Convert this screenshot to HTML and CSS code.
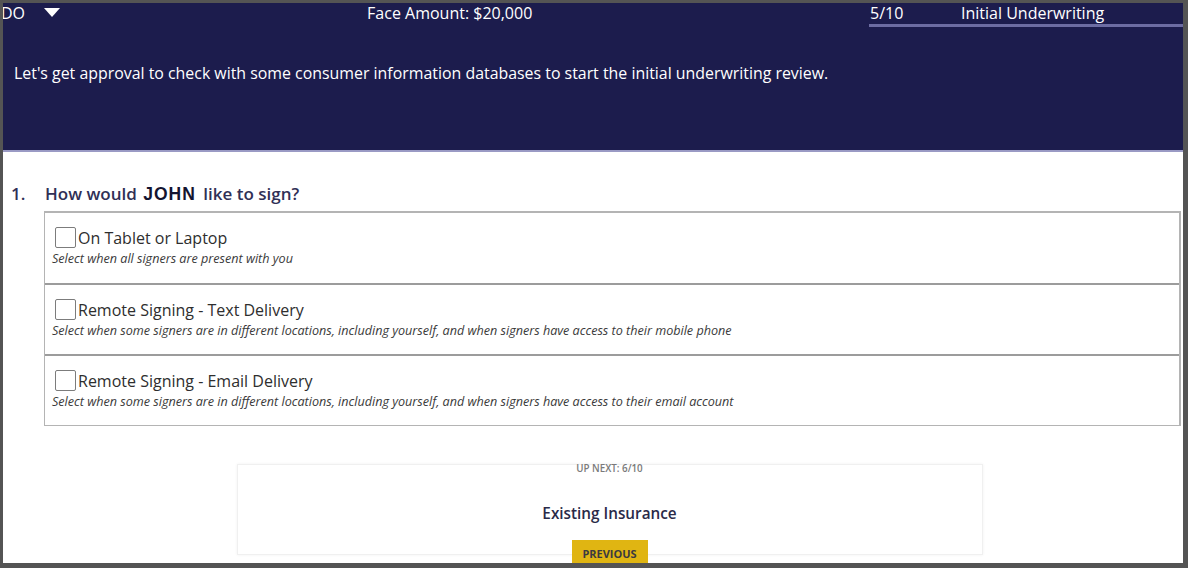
FILE: index.html
```html
<!DOCTYPE html>
<html>
<head>
<meta charset="utf-8">
<link rel="stylesheet" href="styles.css">
</head>
<body>
<div class="frame">
  <header class="hero">
    <div class="topbar">
      <div class="who">
        <span class="name">DO</span>
        <svg class="caret" width="16" height="10" viewBox="0 0 16 10"><polygon points="0,0 16,0 8,9" fill="#fff"/></svg>
      </div>
      <div class="face">Face Amount: $20,000</div>
      <div class="progress">
        <span class="step">5/10</span>
        <span class="stage">Initial Underwriting</span>
      </div>
    </div>
    <p class="intro">Let's get approval to check with some consumer information databases to start the initial underwriting review.</p>
  </header>

  <main class="content">
    <h2 class="question"><span class="num">1.</span><span class="qtext">How would <b class="who-name">JOHN</b> like to sign?</span></h2>
    <div class="options">
      <label class="option">
        <span class="opt-head"><span class="box"></span><span class="opt-label">On Tablet or Laptop</span></span>
        <span class="opt-desc">Select when all signers are present with you</span>
      </label>
      <label class="option">
        <span class="opt-head"><span class="box"></span><span class="opt-label">Remote Signing - Text Delivery</span></span>
        <span class="opt-desc">Select when some signers are in different locations, including yourself, and when signers have access to their mobile phone</span>
      </label>
      <label class="option">
        <span class="opt-head"><span class="box"></span><span class="opt-label">Remote Signing - Email Delivery</span></span>
        <span class="opt-desc">Select when some signers are in different locations, including yourself, and when signers have access to their email account</span>
      </label>
    </div>

    <div class="next-wrap">
      <div class="next-card">
        <div class="next-label">UP NEXT: 6/10</div>
        <div class="next-title">Existing Insurance</div>
        <button class="prev">PREVIOUS</button>
      </div>
    </div>
  </main>
</div>
</body>
</html>
```

FILE: styles.css
```css
* { box-sizing: border-box; }
html, body { margin: 0; padding: 0; background: #545454; }
body { font-family: "Open Sans", "Liberation Sans", sans-serif; }

.frame {
  width: 1188px;
  height: 568px;
  border-style: solid;
  border-color: #545454;
  border-width: 3px 5px 5px 3px;
  background: #fff;
  overflow: hidden;
}

.hero {
  background: #1c1c4d;
  height: 149px;
  border-bottom: 2px solid #9a9ac4;
  color: #fff;
}

.topbar {
  display: flex;
  align-items: flex-start;
  height: 24px;
}
.who {
  display: flex;
  align-items: center;
  height: 21px;
  margin-left: -2px;
}
.name { font-size: 16px; line-height: 21px; }
.caret { margin-left: 19px; margin-top: -2px; }
.face {
  margin-left: 307px;
  font-size: 16px;
  line-height: 21px;
}
.progress {
  margin-left: auto;
  width: 314px;
  display: flex;
  font-size: 16px;
  line-height: 21px;
  border-bottom: 3px solid #6c6ca2;
  padding-left: 1px;
}
.step { width: 91px; }

.intro {
  margin: 36px 0 0 11px;
  font-size: 15.9px;
  line-height: 20px;
}

.content { padding: 0 2px 0 0; }

.question {
  margin: 30px 0 5px 8px;
  display: flex;
  height: 24px;
  font-size: 17px;
  line-height: 24px;
  font-weight: 600;
  color: #303056;
}
.num { width: 34px; }
.qtext { line-height: 24px; }
.who-name {
  font-family: "Liberation Sans", Arial, sans-serif;
  font-weight: 700;
  font-size: 17.5px;
  line-height: 0;
  color: #141430;
  letter-spacing: 1px;
  margin: 0 3px 0 2px;
}

.options {
  margin-left: 41px;
  border: 1px solid #b4b4b4;
  border-top-width: 2px;
  border-right-width: 2px;
}
.option {
  display: flex;
  flex-direction: column;
  height: 71px;
  padding: 14px 0 0 7px;
  border-top: 2px solid #9c9c9c;
}
.option:first-child { border-top: 0; height: 70px; }
.opt-head { display: flex; align-items: center; }
.box {
  width: 21px;
  height: 21px;
  margin-left: 3px;
  border: 1.5px solid #7c7c7c;
  border-radius: 2px;
  background: #fff;
}
.opt-label {
  margin-left: 2px;
  font-size: 16px;
  line-height: 18px;
  color: #2e2e2e;
}
.opt-desc {
  margin-top: 3px;
  font-size: 12.6px;
  line-height: 16px;
  font-style: italic;
  color: #3a3a3a;
}

.next-wrap {
  display: flex;
  justify-content: center;
  margin: 38px 0 0 35px;
}
.next-card {
  width: 746px;
  height: 91px;
  border: 1px solid #f0f0f0;
  box-shadow: 0 0 3px rgba(0,0,0,0.06);
  display: flex;
  flex-direction: column;
  align-items: center;
}
.next-label {
  font-size: 9.8px;
  font-weight: 600;
  line-height: 10px;
  color: #7a7a7a;
  margin-top: -1px;
}
.next-title {
  margin-top: 28px;
  font-size: 15.3px;
  line-height: 22px;
  font-weight: 600;
  color: #2a2a48;
}
.prev {
  margin-top: 16px;
  flex: none;
  width: 76px;
  height: 26px;
  border: 0;
  background: #e0b512;
  font-family: "Open Sans", "Liberation Sans", sans-serif;
  font-size: 11px;
  font-weight: 700;
  color: #3b3a40;
  padding: 0;
}
```
